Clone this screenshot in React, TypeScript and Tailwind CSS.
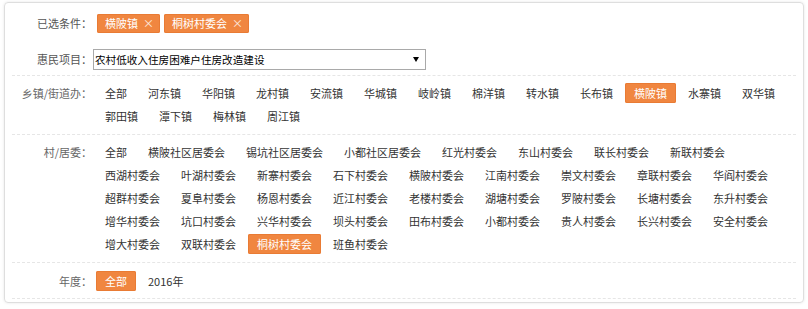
import React from "react";

const towns = ["全部","河东镇","华阳镇","龙村镇","安流镇","华城镇","岐岭镇","棉洋镇","转水镇","长布镇","横陂镇","水寨镇","双华镇","郭田镇","潭下镇","梅林镇","周江镇"];
const villages = ["全部","横陂社区居委会","锡坑社区居委会","小都社区居委会","红光村委会","东山村委会","联长村委会","新联村委会","西湖村委会","叶湖村委会","新寨村委会","石下村委会","横陂村委会","江南村委会","崇文村委会","章联村委会","华阎村委会","超群村委会","夏阜村委会","杨恩村委会","近江村委会","老楼村委会","湖塘村委会","罗陂村委会","长塘村委会","东升村委会","增华村委会","坑口村委会","兴华村委会","坝头村委会","田布村委会","小都村委会","贵人村委会","长兴村委会","安全村委会","增大村委会","双联村委会","桐树村委会","班鱼村委会"];

function Item({ text, active }: { text: string; active?: boolean }) {
  return (
    <span
      className={
        "h-[20px] leading-[20px] px-[9px] rounded-[2px] whitespace-nowrap " +
        (active ? "bg-[#f08640] text-white shadow-[inset_0_0_0_1px_#e97b34]" : "text-[#333]")
      }
    >
      {text}
    </span>
  );
}

function Label({ text }: { text: string }) {
  return <div className="w-[80px] shrink-0 text-right h-[20px] leading-[20px] text-[#666]">{text}</div>;
}

export default function App() {
  return (
    <div className="bg-white w-[808px] h-[309px] pt-[2px] px-1" style={{ fontFamily: '"Noto Sans CJK SC", "Noto Sans", sans-serif' }}>
      <div className="border border-[#dedede] rounded-[4px] shadow-[0_0_3px_rgba(0,0,0,0.10)] px-[7px] pb-[3px] text-[11px]">
        <div className="border-b border-dashed border-[#e6e6e6] pb-[5px]">
          <div className="flex items-center pt-[11px]">
            <div className="w-[80px] shrink-0 text-right h-[19px] leading-[19px] text-[#555]">已选条件：</div>
            <div className="flex gap-[4px] ml-[5px]">
              <span className="h-[19px] leading-[19px] bg-[#f08640] text-white pl-[8px] pr-[6px] rounded-[2px] shadow-[inset_0_0_0_1px_#e97b34] flex items-center">
                横陂镇<span className="ml-[5px] text-white/85">×</span>
              </span>
              <span className="h-[19px] leading-[19px] bg-[#f08640] text-white pl-[8px] pr-[6px] rounded-[2px] shadow-[inset_0_0_0_1px_#e97b34] flex items-center">
                桐树村委会<span className="ml-[5px] text-white/85">×</span>
              </span>
            </div>
          </div>
          <div className="flex items-center mt-[16px]">
            <div className="w-[80px] shrink-0 text-right text-[#555]">惠民项目：</div>
            <div className="ml-[1px] w-[333px] h-[21px] border border-[#a9a9a9] flex items-center justify-between pl-[1px] pr-[6px] text-[10.6px] text-black">
              <span>农村低收入住房困难户住房改造建设</span>
              <span className="w-0 h-0 border-l-[3px] border-r-[3px] border-t-[5px] border-l-transparent border-r-transparent border-t-black" />
            </div>
          </div>
        </div>

        <div className="flex border-b border-dashed border-[#e6e6e6] pt-[7px] pb-[8px]">
          <Label text="乡镇/街道办：" />
          <div className="flex flex-wrap gap-[3px] ml-[4px] flex-1">
            {towns.map((t, i) => (
              <Item key={t + i} text={t} active={i === 10} />
            ))}
          </div>
        </div>

        <div className="flex border-b border-dashed border-[#e6e6e6] pt-[7px] pb-[8px]">
          <Label text="村/居委：" />
          <div className="flex flex-wrap gap-[3px] ml-[4px] flex-1">
            {villages.map((t, i) => (
              <Item key={t + i} text={t} active={t === "桐树村委会"} />
            ))}
          </div>
        </div>

        <div className="flex border-b border-dashed border-[#e6e6e6] pt-[8px] pb-[7px]">
          <Label text="年度：" />
          <div className="flex flex-wrap gap-[3px] ml-[4px] flex-1">
            <Item text="全部" active />
            <Item text="2016年" />
          </div>
        </div>
      </div>
    </div>
  );
}
